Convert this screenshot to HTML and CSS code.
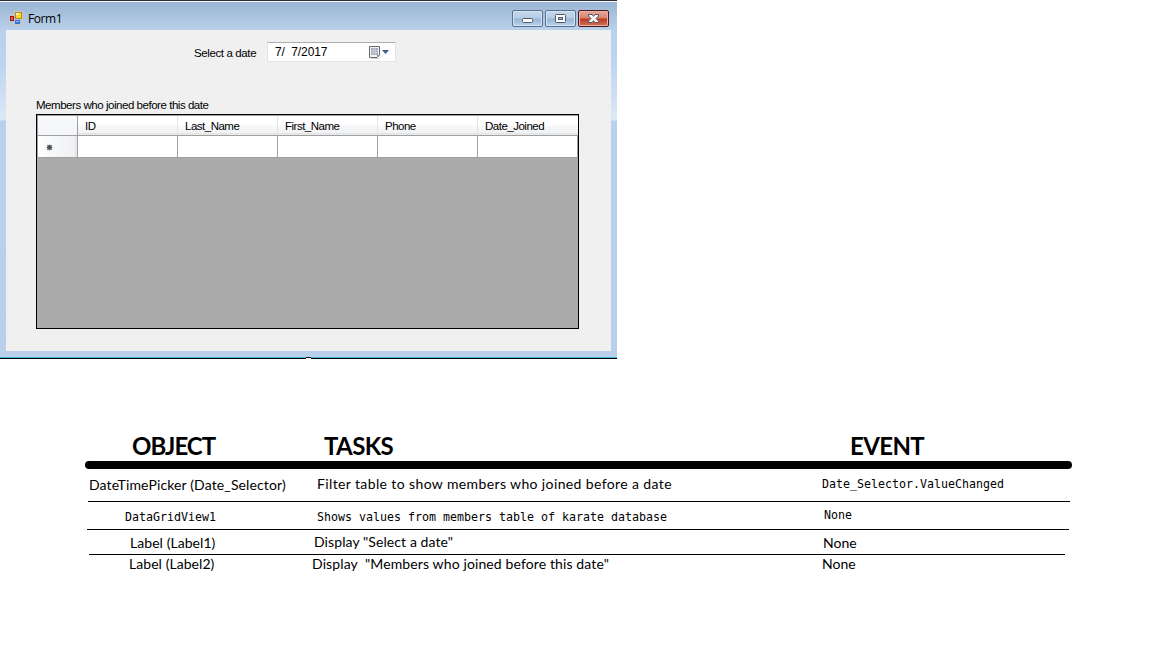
FILE: index.html
```html
<!DOCTYPE html>
<html lang="en">
<head>
<meta charset="utf-8">
<title>Form1</title>
<link rel="stylesheet" href="styles.css">
</head>
<body>
<section class="window">
  <header class="titlebar">
    <svg class="app-icon" width="14" height="14" viewBox="0 0 14 14" shape-rendering="crispEdges">
      <path d="M.5 3.5h5v-3h8v13h-13z" fill="none" stroke="#c9c5c2"/>
      <rect x="6.500" y="1.500" width="6" height="6" fill="#fdd52d" stroke="#bd8719"/>
      <rect x="7" y="2" width="3" height="2" fill="#fff0a0"/>
      <rect x="1.500" y="5.500" width="3" height="4" fill="#e45b43" stroke="#a11612"/>
      <rect x="6" y="9" width="5" height="4" fill="#3d6fd0"/>
      <rect x="7" y="10" width="3" height="1" fill="#8db8f5"/>
    </svg>
    <h1 class="title">Form1</h1>
    <div class="controls">
      <button class="control" aria-label="Minimize"><svg width="29" height="15"><rect x="9.500" y="7.500" width="10" height="4" rx="1" fill="#fff" stroke="#535666"/></svg></button>
      <button class="control" aria-label="Maximize"><svg width="29" height="15"><rect x="9.500" y="3.500" width="10" height="8" rx="1" fill="#fff" stroke="#535666"/><rect x="12.500" y="6.500" width="4" height="2" fill="#a7c5e2" stroke="#535666"/></svg></button>
      <button class="control close" aria-label="Close"><svg width="29" height="15"><path d="M9.500 3.500h3.500l1.500 1.800 1.500-1.800h3.500v1.500l-2.500 2.500 2.500 2.500v1.500h-3.500l-1.500-1.800-1.500 1.800h-3.500v-1.500l2.500-2.500-2.500-2.500z" fill="#f6f6f6" stroke="#535666"/></svg></button>
    </div>
  </header>
  <main class="client">
    <div class="date-row">
      <label class="date-label">Select a date</label>
      <div class="picker">
        <span class="date-value">7/&nbsp; 7/2017</span>
        <svg class="calendar" width="21" height="14" viewBox="0 0 21 14">
          <path d="M2 12.500h8l2-2" fill="none" stroke="#d5d2d0"/>
          <path d="M.5.500h10v8.500l-2.500 2.500h-7.500z" fill="#f4f4f5" stroke="#6c6567"/>
          <path d="M2 2h7v7h-7z" fill="#a3adbb"/>
          <path d="M2 4.500h7M2 6.500h7M4.500 2v7M6.500 2v7" stroke="#d3d9e2" stroke-width=".6"/>
          <path d="M8 11.500v-2.500h2.500z" fill="#8c8688"/>
          <path d="M13 4h7l-3.500 4z" fill="#3f5c8c"/>
        </svg>
      </div>
    </div>
    <p class="members-label">Members who joined before this date</p>
    <div class="grid">
      <div class="grid-row grid-head">
        <span class="corner"></span><span class="head-cell">ID</span><span class="head-cell">Last_Name</span><span class="head-cell">First_Name</span><span class="head-cell">Phone</span><span class="head-cell">Date_Joined</span>
      </div>
      <div class="grid-row">
        <span class="row-head"><svg width="7" height="7" viewBox="0 0 7 7"><circle cx="3.500" cy="3.500" r="2.400" fill="#454545"/><path d="M3.500.500v6M.500 3.500h6M1 1l5 5M6 1l-5 5" stroke="#555" stroke-width=".7"/></svg></span><span class="cell"></span><span class="cell"></span><span class="cell"></span><span class="cell"></span><span class="cell"></span>
      </div>
    </div>
  </main>
  <span class="resize-mark"></span>
</section>

<section class="spec">
  <div class="spec-row spec-head"><h2 class="object-title">OBJECT</h2><h2 class="tasks-title">TASKS</h2><h2 class="event-title">EVENT</h2></div>
  <div class="thick-rule"></div>
  <div class="spec-row row-picker"><span class="picker-object">DateTimePicker (Date_Selector)</span><span class="picker-task">Filter table to show members who joined before a date</span><span class="code picker-event">Date_Selector.ValueChanged</span></div>
  <div class="rule rule-one"></div>
  <div class="spec-row row-grid"><span class="code grid-object">DataGridView1</span><span class="code grid-task">Shows values from members table of karate database</span><span class="code grid-event">None</span></div>
  <div class="rule rule-two"></div>
  <div class="spec-row row-label1"><span class="label1-object">Label (Label1)</span><span class="label1-task">Display "Select a date"</span><span class="label1-event">None</span></div>
  <div class="rule rule-three"></div>
  <div class="spec-row row-label2"><span class="label2-object">Label (Label2)</span><span class="label2-task">Display&nbsp; "Members who joined before this date"</span><span class="label2-event">None</span></div>
</section>
</body>
</html>
```
FILE: styles.css
```css
* { box-sizing: border-box; }
body { margin: 0; background: #fff; color: #000; width: 1152px; height: 648px; overflow: hidden; }
h1, h2, p { margin: 0; font-weight: normal; }
svg { display: block; }

.window {
  position: relative;
  width: 617px;
  height: 359px;
  padding: 0 6px;
  border-top: 1px solid #302d35;
  border-bottom: 1px solid #000;
  background: linear-gradient(#9ab4d2 0, #b9d1ea 29px, #bfd5ef 65px, #dce8f6 119px, #b9d1ea 120px, #bad0ea 356px, #42bfd8 356px);
  box-shadow: inset 0 1px #f5f9fd;
}
.titlebar { display: flex; height: 29px; align-items: flex-start; }
.app-icon { margin: 10px 0 0 3px; }
.title { margin: 10px 0 0 5px; font: 12px/16px "Open Sans", sans-serif; letter-spacing: -.4px; }
.controls { display: flex; gap: 2px; margin: 9px 2px 0 auto; }
.control {
  width: 31px; height: 17px; padding: 0;
  border: 1px solid #586f8d; border-radius: 2px;
  background: linear-gradient(#c4d7eb 0, #b5cde5 7px, #98b5d3 8px, #b8d5ef 15px);
  box-shadow: inset 0 0 0 1px #d5e4f3;
}
.close {
  border-color: #4d1724;
  background: linear-gradient(#e7aa9f 0, #d88373 7px, #b83822 8px, #d37656 15px);
  box-shadow: inset 0 0 0 1px #e9b2a6;
}
.client { height: 321px; background: #f0f0f0; padding-left: 30px; font: 11.5px/14px "Liberation Sans", sans-serif; }
.date-row { display: flex; height: 68px; padding: 12px 0 0 158px; }
.date-label { width: 73px; padding-top: 4px; letter-spacing: -.38px; white-space: nowrap; }
.picker {
  display: flex; justify-content: space-between; width: 129px; height: 20px; padding: 3px 5px 0 7px;
  border: 1px solid #e2e3ea; border-top-color: #abadb3; background: #fff;
}
.date-value { font-size: 12px; letter-spacing: -.1px; margin-top: -1px; white-space: pre; }
.members-label { height: 16px; letter-spacing: -.46px; white-space: nowrap; }
.grid { width: 543px; height: 215px; border: 1px solid #000; background: #ababab; }
.grid-row { display: grid; grid-template-columns: 41px repeat(5, 100px); height: 22px; background: #fff; border-bottom: 1px solid #a0a0a0; }
.grid-head { height: 21px; background: linear-gradient(#fff 0, #fff 9px, #f6f7f8 10px, #f1f2f4 17px, #d5d5d5 18px, #fff 19px); border-top: 1px solid #a0a0a0; }
.corner { background: linear-gradient(#f8f9fb, #f3f5f8); border: solid #a0a0a0; border-width: 0 1px; }
.head-cell { padding: 3px 0 0 7px; letter-spacing: -.5px; border-right: 1px solid #e3e4e6; }
.head-cell:last-child { border-right: 0; }
.row-head { padding: 8px 0 0 8px; background: linear-gradient(90deg, #fff 0, #f8f9fb 10px, #eff1f4 37px, #d5d5d5 38px, #fff 39px); border: solid #a0a0a0; border-width: 0 1px; }
.cell { border-right: 1px solid #a0a0a0; }
.resize-mark { position: absolute; left: 306px; bottom: -1px; width: 5px; height: 2px; background: #fff; border-top: 1px solid #000; }

.spec { width: 1072px; padding-top: 72px; font: 14px/18px Lato, sans-serif; }
.spec-row { display: grid; grid-template-columns: 300px 500px 272px; white-space: pre; }
.spec-head { height: 30px; }
.spec-head h2 { font: bold 24px/30px Lato, sans-serif; }
.spec-head .object-title { padding-left: 132px; letter-spacing: -1px; }
.spec-head .tasks-title { padding-left: 24px; letter-spacing: -.6px; }
.spec-head .event-title { padding-left: 50px; letter-spacing: -.6px; }
.thick-rule { height: 8px; margin-left: 85px; border-radius: 4px; background: #000; }
.rule { height: 1px; background: #000; }
.rule-one { margin: 0 2px 0 88px; }
.rule-two { margin: 0 3px 0 87px; }
.rule-three { margin: 0 7px 0 89px; }
.code { font: 11.630px/16px "DejaVu Sans Mono", monospace; }
.row-picker { height: 32px; }
.row-grid { height: 27px; }
.row-label1 { height: 24px; }
.row-label2 { height: 22px; }
.picker-object { padding: 7px 0 0 89px; letter-spacing: .13px; }
.picker-task { padding: 6px 0 0 17px; letter-spacing: .38px; }
.picker-event { padding: 7px 0 0 22px; }
.grid-object { padding: 7px 0 0 125px; }
.grid-task { padding: 7px 0 0 17px; }
.grid-event { padding: 5px 0 0 24px; }
.label1-object { padding: 4px 0 0 130px; letter-spacing: .06px; }
.label1-task { padding: 3px 0 0 14px; letter-spacing: .09px; }
.label1-event { padding: 4px 0 0 23px; }
.label2-object { padding: 0 0 0 129px; letter-spacing: .06px; }
.label2-task { padding: 0 0 0 12px; letter-spacing: .12px; }
.label2-event { padding: 0 0 0 22px; }
```
